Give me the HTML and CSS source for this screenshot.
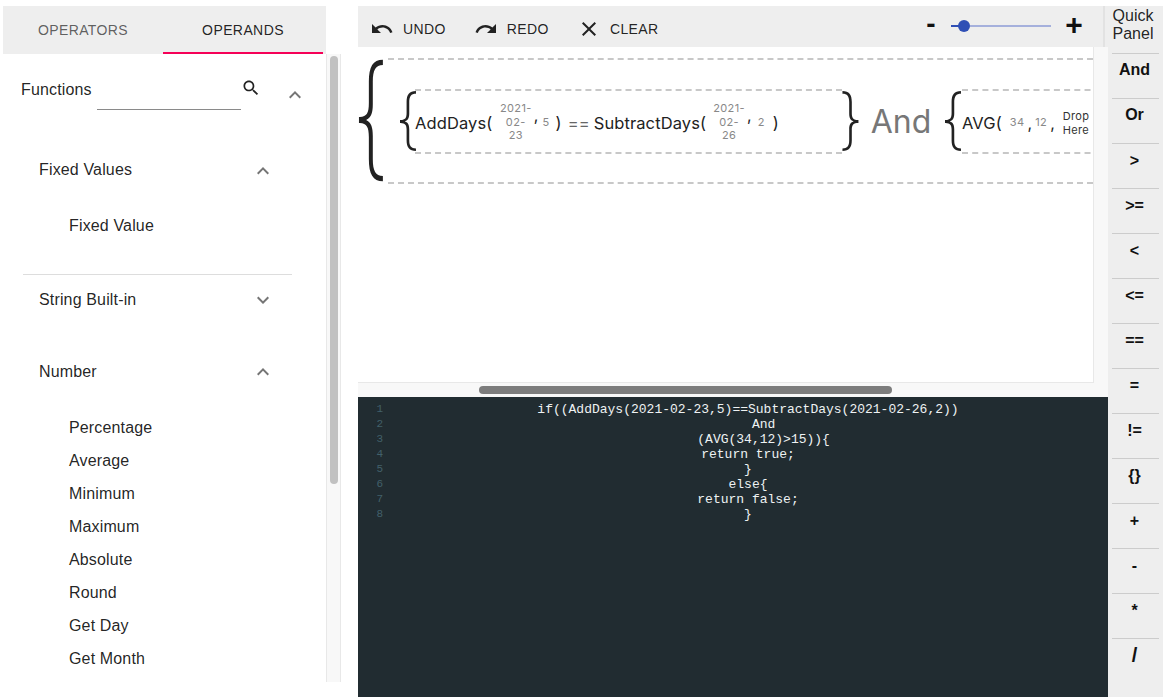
FILE: index.html
```html
<!DOCTYPE html>
<html lang="en">

<head>
    <meta charset="UTF-8">
    <title>Rule Builder</title>
    <link rel="stylesheet" href="styles.css">
</head>

<body>
    <div class="side">
        <div class="tabs">
            <div class="tab">Operators</div>
            <div class="tab active">Operands</div>
        </div>
        <div class="side-body">
            <div class="list">
                <div class="head">
                    <span class="head-title">Functions</span>
                    <span class="search-line"></span>
                    <svg class="search-icon" viewBox="0 0 24 24"><path d="M15.5 14h-.79l-.28-.27C15.41 12.59 16 11.11 16 9.5 16 5.91 13.09 3 9.5 3S3 5.91 3 9.5 5.91 16 9.5 16c1.61 0 3.09-.59 4.23-1.57l.27.28v.79l5 4.99L20.49 19l-4.99-5zm-6 0C7.01 14 5 11.99 5 9.5S7.01 5 9.5 5 14 7.01 14 9.5 11.99 14 9.5 14z"/></svg>
                    <svg class="chev chev-top" viewBox="0 0 24 24"><path d="M12 8l-6 6 1.41 1.41L12 10.83l4.59 4.58L18 14z"/></svg>
                </div>

                <div class="group fixed">
                    <span>Fixed Values</span>
                    <svg class="chev" viewBox="0 0 24 24"><path d="M12 8l-6 6 1.41 1.41L12 10.83l4.59 4.58L18 14z"/></svg>
                </div>
                <div class="item first">Fixed Value</div>
                <div class="divider"></div>

                <div class="group string">
                    <span>String Built-in</span>
                    <svg class="chev" viewBox="0 0 24 24"><path d="M16.59 8.59L12 13.17 7.41 8.59 6 10l6 6 6-6z"/></svg>
                </div>

                <div class="group number">
                    <span>Number</span>
                    <svg class="chev" viewBox="0 0 24 24"><path d="M12 8l-6 6 1.41 1.41L12 10.83l4.59 4.58L18 14z"/></svg>
                </div>
                <div class="item first">Percentage</div>
                <div class="item">Average</div>
                <div class="item">Minimum</div>
                <div class="item">Maximum</div>
                <div class="item">Absolute</div>
                <div class="item">Round</div>
                <div class="item">Get Day</div>
                <div class="item">Get Month</div>
            </div>
            <div class="side-scroll">
                <div class="side-thumb"></div>
            </div>
        </div>
    </div>

    <div class="main">
        <div class="toolbar">
            <div class="btn">
                <svg viewBox="0 0 24 24"><path d="M12.5 8c-2.65 0-5.05.99-6.9 2.6L2 7v9h9l-3.62-3.62c1.39-1.16 3.16-1.88 5.12-1.88 3.54 0 6.55 2.31 7.6 5.5l2.37-.78C21.08 11.03 17.15 8 12.5 8z"/></svg>
                <span>Undo</span>
            </div>
            <div class="btn">
                <svg viewBox="0 0 24 24"><path d="M18.4 10.6C16.55 8.99 14.15 8 11.5 8c-4.65 0-8.58 3.03-9.96 7.22L3.9 16c1.05-3.19 4.05-5.5 7.6-5.5 1.95 0 3.73.72 5.12 1.88L13 16h9V7l-3.6 3.6z"/></svg>
                <span>Redo</span>
            </div>
            <div class="btn">
                <svg viewBox="0 0 24 24"><path d="M19 6.41L17.59 5 12 10.59 6.41 5 5 6.41 10.59 12 5 17.59 6.41 19 12 13.41 17.59 19 19 17.59 13.41 12z"/></svg>
                <span>Clear</span>
            </div>
            <div class="zoom">
                <span class="zoom-sign minus">-</span>
                <div class="slider">
                    <div class="slider-fill"></div>
                    <div class="slider-thumb"></div>
                    <div class="slider-rail"></div>
                </div>
                <span class="zoom-sign plus">+</span>
            </div>
            <div class="quick-title">Quick Panel</div>
        </div>

        <div class="content">
            <div class="work">
                <div class="canvas-row">
                    <div class="canvas">
                        <div class="rule">
                            <span class="brace big">{</span>
                            <div class="rule-box">
                                <span class="brace">{</span>
                                <div class="cond cond-a">
                                    <span class="fn">AddDays(</span>
                                    <span class="val date">2021-<br>02-<br>23</span>
                                    <span class="comma">,</span>
                                    <span class="val">5</span>
                                    <span class="fn paren">)</span>
                                    <span class="fn eq">==</span>
                                    <span class="fn">SubtractDays(</span>
                                    <span class="val date date-two">2021-<br>02-<br>26</span>
                                    <span class="comma comma-two">,</span>
                                    <span class="val">2</span>
                                    <span class="fn paren paren-two">)</span>
                                </div>
                                <span class="brace">}</span>
                                <span class="and">And</span>
                                <span class="brace">{</span>
                                <div class="cond cond-b">
                                    <span class="fn">AVG(</span>
                                    <span class="val num">34</span>
                                    <span class="comma low">,</span>
                                    <span class="val num-two">12</span>
                                    <span class="comma low">,</span>
                                    <span class="drop">Drop<br>Here</span>
                                </div>
                            </div>
                        </div>
                    </div>
                    <div class="canvas-scroll"></div>
                </div>
                <div class="h-scroll">
                    <div class="h-thumb"></div>
                </div>
                <div class="editor">
                    <div class="gutter">
                        <div>1</div><div>2</div><div>3</div><div>4</div><div>5</div><div>6</div><div>7</div><div>8</div>
                    </div>
                    <div class="code">
                        <div>if((AddDays(2021-02-23,5)==SubtractDays(2021-02-26,2))</div>
                        <div>    And</div>
                        <div>    (AVG(34,12)&gt;15)){</div>
                        <div>return true;</div>
                        <div>}</div>
                        <div>else{</div>
                        <div>return false;</div>
                        <div>}</div>
                    </div>
                </div>
            </div>

            <div class="quick">
                <div class="q-btn word">And</div>
                <div class="q-btn word">Or</div>
                <div class="q-btn">&gt;</div>
                <div class="q-btn">&gt;=</div>
                <div class="q-btn">&lt;</div>
                <div class="q-btn">&lt;=</div>
                <div class="q-btn">==</div>
                <div class="q-btn">=</div>
                <div class="q-btn">!=</div>
                <div class="q-btn">{}</div>
                <div class="q-btn">+</div>
                <div class="q-btn">-</div>
                <div class="q-btn">*</div>
                <div class="q-btn slash">/</div>
            </div>
        </div>
    </div>
</body>

</html>
```

FILE: styles.css
```css
* {
    box-sizing: border-box;
}

html,
body {
    margin: 0;
    padding: 0;
    height: 697px;
    overflow: hidden;
}

body {
    display: flex;
    padding-top: 6px;
    background-color: #fff;
    font-family: "Liberation Sans", Arial, sans-serif;
    color: rgba(0, 0, 0, 0.87);
}

/* left panel */
.side {
    width: 338px;
    margin-left: 3px;
    flex-shrink: 0;
}

.tabs {
    display: flex;
    width: 323px;
    height: 48px;
    background-color: #eeeeee;
}

.tab {
    width: 160px;
    height: 48px;
    line-height: 48px;
    text-align: center;
    font-size: 14px;
    letter-spacing: 0.4px;
    text-transform: uppercase;
    color: rgba(0, 0, 0, 0.62);
}

.tab.active {
    color: rgba(0, 0, 0, 0.87);
    border-bottom: 2px solid #f50057;
}

.side-body {
    display: flex;
    height: 628px;
}

.list {
    width: 323px;
    overflow: hidden;
    font-size: 16px;
    letter-spacing: 0.15px;
}

.head {
    display: flex;
    height: 56px;
    margin-top: 16px;
    padding-left: 18px;
}

.head-title {
    width: 76px;
    line-height: 40px;
}

.search-line {
    width: 144px;
    height: 40px;
    border-bottom: 1px solid #8a8a8a;
}

.search-icon {
    width: 20px;
    height: 20px;
    margin: 8px 0 0 0;
    fill: #222;
}

.chev {
    width: 24px;
    height: 24px;
    fill: #757575;
}

.chev-top {
    margin: 13px 0 0 22px;
}

.group {
    display: flex;
    justify-content: space-between;
    align-items: center;
    width: 272px;
    height: 24px;
    margin-top: 32px;
    padding-left: 36px;
}

.group.fixed .chev {
    margin-top: 2px;
}

.group.string {
    margin-top: 13px;
}

.group.number {
    margin-top: 48px;
}

.item {
    height: 33px;
    line-height: 33px;
    padding-left: 66px;
}

.item.first {
    margin-top: 27px;
}

.divider {
    width: 269px;
    height: 1px;
    margin: 32px 0 0 20px;
    background-color: #dddddd;
}

.side-scroll {
    width: 15px;
    height: 628px;
    padding: 2px 3px 0 3px;
    background-color: #f8f8f8;
    border-left: 1px solid #e8e8e8;
    border-right: 1px solid #e8e8e8;
}

.side-thumb {
    width: 8px;
    height: 428px;
    border-radius: 4px;
    background-color: #c1c1c1;
}

/* right side */
.main {
    width: 805px;
    margin-left: 17px;
    flex-shrink: 0;
}

.toolbar {
    display: flex;
    align-items: center;
    height: 41px;
    padding-left: 12px;
    background-color: #eeeeee;
}

.btn {
    display: flex;
    align-items: center;
    margin: 4px 28px 0 0;
    font-size: 14px;
    letter-spacing: 0.4px;
    text-transform: uppercase;
}

.btn svg {
    width: 24px;
    height: 24px;
    margin-right: 9px;
    fill: #222;
}

.zoom {
    display: flex;
    align-items: center;
    margin: -2px 0 0 auto;
}

.zoom-sign {
    font-weight: bold;
    color: #111;
    text-align: center;
}

.minus {
    width: 12px;
    font-size: 28px;
    line-height: 30px;
    margin-top: -4px;
}

.plus {
    width: 18px;
    font-size: 30px;
    line-height: 30px;
    margin: -1px 0 0 14px;
}

.slider {
    display: flex;
    align-items: center;
    width: 100px;
    margin-left: 14px;
}

.slider-fill {
    width: 8px;
    height: 2px;
    background-color: #2f4fb5;
}

.slider-thumb {
    width: 12px;
    height: 12px;
    margin-left: -1px;
    border-radius: 50%;
    background-color: #2f4fb5;
}

.slider-rail {
    flex: 1;
    height: 2px;
    background-color: #a5b0dc;
}

.quick-title {
    width: 60px;
    height: 41px;
    margin-left: 20px;
    padding: 1px 2px 0 0;
    border-left: 2px solid #e2e2e2;
    text-align: center;
    font-size: 16px;
    line-height: 18px;
}

.content {
    display: flex;
}

.work {
    width: 750px;
}

.canvas-row {
    display: flex;
    height: 336px;
}

.canvas {
    width: 735px;
    background-color: #fff;
    border-bottom: 1px solid #e8e8e8;
}

.canvas-scroll {
    width: 15px;
    background-color: #f8f8f8;
    border-left: 1px solid #e8e8e8;
}

.rule {
    display: flex;
    align-items: center;
    width: 735px;
    margin-top: 11px;
    height: 126px;
    font-family: Inter, "Liberation Sans", sans-serif;
}

.brace {
    width: 16px;
    flex-shrink: 0;
    text-align: center;
    font-family: Inter, sans-serif;
    font-weight: 200;
    font-size: 66px;
    line-height: 60px;
    color: #222;
    transform: translate(-4.5px, -3px) scaleX(0.95);
}

.brace.big {
    width: 30px;
    font-size: 134px;
    font-weight: 250;
    line-height: 120px;
    transform: translate(-11px, -7px) scaleX(0.7);
}

.rule-box {
    display: flex;
    align-items: center;
    height: 126px;
    padding-left: 11px;
    flex: 1;
    min-width: 0;
    overflow: hidden;
    border-top: 2px dashed #c8c8c8;
    border-bottom: 2px dashed #c8c8c8;
}

.cond {
    display: flex;
    flex-shrink: 0;
    align-items: center;
    height: 65px;
    border-top: 2px dashed #c8c8c8;
    border-bottom: 2px dashed #c8c8c8;
}

.cond-a {
    width: 427px;
}

.cond-b {
    width: 200px;
    margin-left: 2px;
}

.fn {
    padding-top: 3px;
    font-size: 16.5px;
    letter-spacing: 0.1px;
    color: #222;
    white-space: nowrap;
}

.val {
    padding-top: 3px;
    font-size: 11px;
    line-height: 13.5px;
    text-align: center;
    color: #888;
    letter-spacing: 0.4px;
}

.date {
    width: 36px;
    margin-left: 5.5px;
}

.date-two {
    margin-left: 5px;
}

.comma {
    font-size: 16px;
    margin: -12px 4px 0 0;
    color: #222;
}

.comma-two {
    margin-right: 6px;
}

.comma.low {
    margin: 3px 0 0 3px;
}

.num {
    margin-left: 8px;
}

.num-two {
    margin-left: 3px;
}

.paren {
    margin-left: 6px;
}

.paren-two {
    margin-left: 8px;
}

.eq {
    margin: 0 4px 0 6px;
    color: #666;
}

.and {
    width: 86px;
    flex-shrink: 0;
    text-align: center;
    font-size: 32px;
    color: #777;
}

.drop {
    padding-top: 3px;
    margin-left: 8px;
    font-size: 11px;
    line-height: 14px;
    letter-spacing: 0.3px;
    color: #333;
}

.h-scroll {
    height: 14px;
    padding: 3px 0 0 121px;
    background-color: #f8f8f8;
}

.h-thumb {
    width: 413px;
    height: 8px;
    border-radius: 4px;
    background-color: #7d7d7d;
}

.editor {
    display: flex;
    height: 300px;
    padding-top: 5px;
    background-color: #212c31;
    font-family: "Liberation Mono", monospace;
    font-size: 13px;
    line-height: 15px;
}

.gutter {
    width: 26px;
    text-align: right;
    padding-right: 1px;
    font-size: 11px;
    color: #41606a;
}

.code {
    width: 724px;
    padding-left: 4px;
    text-align: center;
    color: #eef2f3;
}

.code div {
    white-space: pre;
}

.quick {
    width: 55px;
    height: 650px;
    padding: 6px 4px 0 4px;
    background-color: #eeeeee;
}

.q-btn {
    height: 45px;
    padding: 8px 2px 0 0;
    border-top: 1px solid #cccccc;
    text-align: center;
    font-size: 16px;
    font-weight: bold;
    color: #111;
}

.q-btn.word {
    padding-top: 7px;
}

.q-btn.slash {
    padding-top: 5px;
    font-size: 20px;
}
```
